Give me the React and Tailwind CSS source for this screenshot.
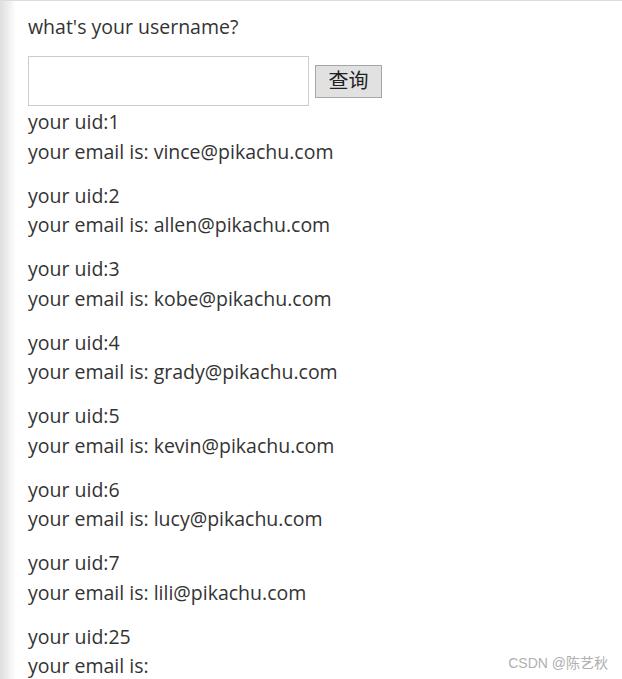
export default function App() {
  const rows = [
    ["1", "vince@pikachu.com"],
    ["2", "allen@pikachu.com"],
    ["3", "kobe@pikachu.com"],
    ["4", "grady@pikachu.com"],
    ["5", "kevin@pikachu.com"],
    ["6", "lucy@pikachu.com"],
    ["7", "lili@pikachu.com"],
    ["25", ""],
  ];
  return (
    <div
      className="relative w-[622px] h-[679px] overflow-hidden bg-white border-t border-[#dcdcdc] text-[#333333] text-[19.5px] leading-[29.5px]"
      style={{ fontFamily: '"Open Sans", "Noto Sans CJK SC", sans-serif' }}
    >
      <div className="absolute left-0 top-0 bottom-0 w-[16px] bg-gradient-to-r from-[#dedede] to-white" />
      <div className="relative pl-[28px] pt-[11px] flex flex-col">
        <div>what's your username?</div>
        <div className="mt-[14.5px] flex items-center gap-[6px]">
          <input className="w-[281px] h-[50px] border border-[#cccccc] bg-white outline-none" />
          <button className="w-[67px] h-[33px] border border-[#a6a6a6] bg-[#e1e1e1] text-[20px] leading-none text-[#222]">
            查询
          </button>
        </div>
        <div className="mt-px flex flex-col gap-[14.5px]">
          {rows.map(([uid, email]) => (
            <div key={uid} className="flex flex-col">
              <div>your uid:{uid}</div>
              <div>your email is: {email}</div>
            </div>
          ))}
        </div>
      </div>
      <div
        className="absolute right-[14px] top-[652px] text-[14px] leading-[20px] text-[#b0b0b0]"
        style={{ fontFamily: '"Liberation Sans", "Noto Sans CJK SC", sans-serif' }}
      >
        CSDN @陈艺秋
      </div>
    </div>
  );
}
